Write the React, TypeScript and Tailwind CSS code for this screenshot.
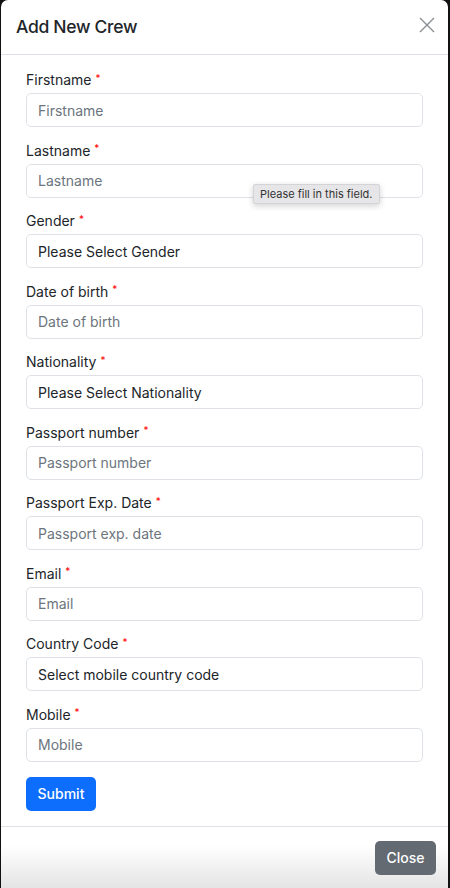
import React from 'react';

type Field = { label: string; placeholder: string; select?: boolean };

const fields: Field[] = [
  { label: 'Firstname', placeholder: 'Firstname' },
  { label: 'Lastname', placeholder: 'Lastname' },
  { label: 'Gender', placeholder: 'Please Select Gender', select: true },
  { label: 'Date of birth', placeholder: 'Date of birth' },
  { label: 'Nationality', placeholder: 'Please Select Nationality', select: true },
  { label: 'Passport number', placeholder: 'Passport number' },
  { label: 'Passport Exp. Date', placeholder: 'Passport exp. date' },
  { label: 'Email', placeholder: 'Email' },
  { label: 'Country Code', placeholder: 'Select mobile country code', select: true },
  { label: 'Mobile', placeholder: 'Mobile' },
];

export default function App() {
  return (
    <div className="min-h-[888px] bg-[#111] px-px font-['Inter',sans-serif] text-[#212529]">
      <div className="flex h-[888px] w-[447px] flex-col overflow-hidden rounded-t-[7px] bg-white">
        {/* Header */}
        <div className="flex h-[55px] shrink-0 items-center justify-between border-b border-[#dee2e6] pl-[15px] pr-[8px]">
          <h5 className="text-[17.5px] font-medium leading-none tracking-[-0.3px]">Add New Crew</h5>
          <button className="mb-[4px] flex h-[26px] w-[26px] items-center justify-center text-[#8a8d91]">
            <svg width="16" height="16" viewBox="0 0 16 16" fill="none" stroke="currentColor" strokeWidth="1.4">
              <path d="M1 1l14 14M15 1L1 15" />
            </svg>
          </button>
        </div>

        {/* Body */}
        <div className="flex shrink-0 flex-col items-stretch px-[25px] pb-[15px] pt-[15px]">
          {fields.map((f, i) => (
            <div key={f.label} className="relative mb-[13.5px]">
              <label className="mb-[3px] flex h-[20px] items-center text-[14px] leading-[20px]">
                {f.label}
                <span className="ml-[4px] -mt-[5px] text-[10px] leading-none text-[#ff0000]">*</span>
              </label>
              <div
                className={`flex h-[34px] items-center rounded-[5px] border border-[#dee2e6] px-[11px] text-[14px] ${
                  f.select ? 'text-[#212529]' : 'text-[#6c757d]'
                }`}
              >
                {f.placeholder}
              </div>
              {i === 1 && (
                <div className="absolute left-[227px] top-[43px] rounded-[2px] border border-[#d4d3d6] bg-[#e6e5e8] px-[6px] py-[2px] text-[11px] leading-[14px] text-[#333] shadow-[0_2px_6px_rgba(0,0,0,0.18)]">
                  Please fill in this field.
                </div>
              )}
            </div>
          ))}
          <button className="mt-[1.5px] flex h-[34px] w-[70px] items-center justify-center self-start rounded-[5px] bg-[#0d6efd] text-[14px] font-medium text-white">
            Submit
          </button>
        </div>

        {/* Footer */}
        <div className="flex flex-1 items-start justify-end border-t border-[#dee2e6] bg-gradient-to-b from-white from-30% to-[#e4e4e4] pr-[12px] pt-[14px]">
          <button className="flex h-[34px] w-[61px] items-center justify-center rounded-[5px] bg-[#636a71] text-[14px] font-medium text-white">
            Close
          </button>
        </div>
      </div>
    </div>
  );
}
